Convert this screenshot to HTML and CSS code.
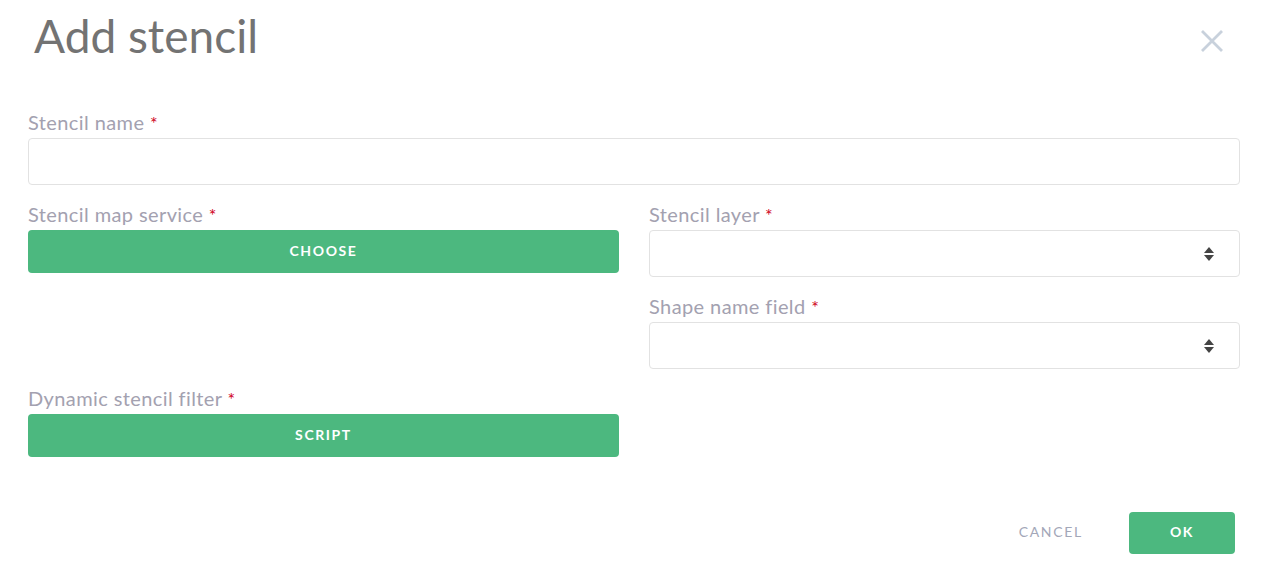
FILE: index.html
```html
<!DOCTYPE html>
<html lang="en">
<head>
<meta charset="utf-8">
<title>Add stencil</title>
<link rel="stylesheet" href="styles.css">
</head>
<body>
<div class="dialog">
  <header class="head">
    <h1 class="title">Add stencil</h1>
    <button class="close" aria-label="Close">
      <svg width="24" height="24" viewBox="0 0 24 24"><path d="M2 2 L22 22 M22 2 L2 22" stroke="#c8d1dc" stroke-width="2.8" fill="none"/></svg>
    </button>
  </header>
  <div class="form">
    <div class="group full">
      <label class="label">Stencil name <span class="req">*</span></label>
      <input class="input" type="text">
    </div>
    <div class="group">
      <label class="label">Stencil map service <span class="req">*</span></label>
      <button class="btn wide">CHOOSE</button>
    </div>
    <div class="group">
      <label class="label">Stencil layer <span class="req">*</span></label>
      <div class="select"><span class="arrows"><i class="up"></i><i class="down"></i></span></div>
    </div>
    <div class="group empty"></div>
    <div class="group">
      <label class="label">Shape name field <span class="req">*</span></label>
      <div class="select"><span class="arrows"><i class="up"></i><i class="down"></i></span></div>
    </div>
    <div class="group">
      <label class="label">Dynamic stencil filter <span class="req">*</span></label>
      <button class="btn wide">SCRIPT</button>
    </div>
  </div>
  <footer class="foot">
    <button class="cancel">CANCEL</button>
    <button class="btn ok">OK</button>
  </footer>
</div>
</body>
</html>
```
FILE: styles.css
```css
html, body {
  margin: 0;
  padding: 0;
  background: #ffffff;
}
body {
  font-family: Lato, "Noto Sans", sans-serif;
}
.dialog {
  width: 1212px;
  margin-left: 28px;
}
.head {
  display: flex;
  justify-content: space-between;
  align-items: flex-start;
  height: 112px;
}
.title {
  margin: 9px 0 0 6px;
  font-size: 46px;
  font-weight: 400;
  color: #737373;
  line-height: 54px;
}
.close {
  margin: 29px 16px 0 0;
  padding: 0;
  border: 0;
  background: none;
  width: 24px;
  height: 24px;
}
.close svg { display: block; }
.form {
  display: grid;
  grid-template-columns: 1fr 1fr;
  column-gap: 30px;
  row-gap: 19px;
}
.group {
  display: flex;
  flex-direction: column;
}
.full { grid-column: 1 / 3; }
.label {
  display: block;
  height: 26px;
  line-height: 20px;
  font-size: 20px;
  letter-spacing: 0.4px;
  color: #a3a1b0;
}
.req { color: #d0021b; font-size: 18px; }
.input, .select {
  box-sizing: border-box;
  height: 47px;
  width: 100%;
  border: 1px solid #e2e2e2;
  border-radius: 4px;
  background: #fff;
  margin: 0;
}
.select {
  display: flex;
  justify-content: flex-end;
  align-items: center;
  padding-right: 25px;
}
.arrows {
  display: flex;
  flex-direction: column;
  gap: 2px;
}
.arrows i {
  display: block;
  width: 0;
  height: 0;
  border-left: 5px solid transparent;
  border-right: 5px solid transparent;
}
.arrows .up { border-bottom: 6px solid #444; }
.arrows .down { border-top: 6px solid #444; }
.btn {
  border: 0;
  border-radius: 4px;
  background: #4cb87f;
  color: #fff;
  font-family: Lato, "Noto Sans", sans-serif;
  font-weight: 700;
  font-size: 14px;
  letter-spacing: 1.6px;
  padding: 0 0 3px 0;
  margin: 0;
}
.wide {
  height: 43px;
  width: 100%;
}
.foot {
  display: flex;
  justify-content: flex-end;
  align-items: center;
  gap: 46px;
  margin-top: 55px;
  padding-right: 5px;
}
.cancel {
  border: 0;
  background: none;
  padding: 0 0 3px 0;
  font-family: Lato, "Noto Sans", sans-serif;
  font-size: 14px;
  letter-spacing: 1.7px;
  color: #a3a7b8;
}
.ok {
  width: 106px;
  height: 42px;
}
```
